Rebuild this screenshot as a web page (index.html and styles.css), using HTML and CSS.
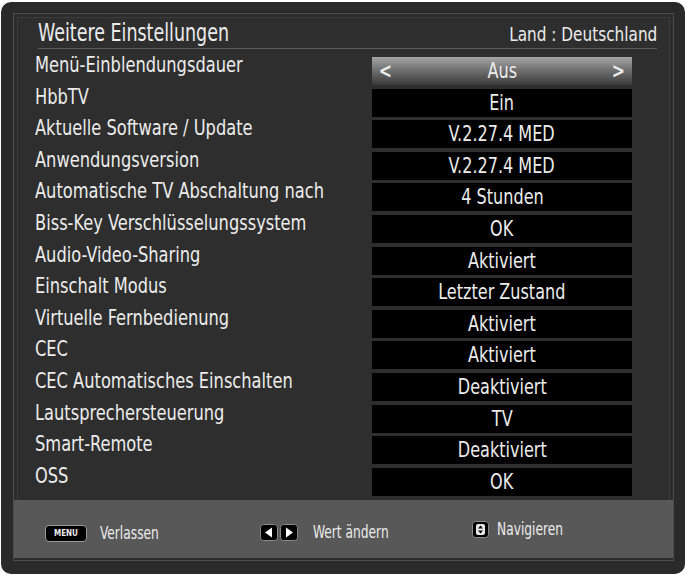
FILE: index.html
```html
<!DOCTYPE html>
<html lang="de">
<head>
<meta charset="utf-8">
<link rel="stylesheet" href="styles.css">
</head>
<body>
<div class="frame">
  <div class="panel">
    <div class="header">
      <span class="title">Weitere Einstellungen</span>
      <span class="country">Land : Deutschland</span>
    </div>
    <div class="rows">
      <div class="row"><span class="label">Menü-Einblendungsdauer</span><span class="value selected"><span class="chev">&lt;</span><span class="vt">Aus</span><span class="chev">&gt;</span></span></div>
      <div class="row"><span class="label">HbbTV</span><span class="value"><span class="vt">Ein</span></span></div>
      <div class="row"><span class="label">Aktuelle Software / Update</span><span class="value"><span class="vt">V.2.27.4 MED</span></span></div>
      <div class="row"><span class="label">Anwendungsversion</span><span class="value"><span class="vt">V.2.27.4 MED</span></span></div>
      <div class="row"><span class="label">Automatische TV Abschaltung nach</span><span class="value"><span class="vt">4 Stunden</span></span></div>
      <div class="row"><span class="label">Biss-Key Verschlüsselungssystem</span><span class="value"><span class="vt">OK</span></span></div>
      <div class="row"><span class="label">Audio-Video-Sharing</span><span class="value"><span class="vt">Aktiviert</span></span></div>
      <div class="row"><span class="label">Einschalt Modus</span><span class="value"><span class="vt">Letzter Zustand</span></span></div>
      <div class="row"><span class="label">Virtuelle Fernbedienung</span><span class="value"><span class="vt">Aktiviert</span></span></div>
      <div class="row"><span class="label">CEC</span><span class="value"><span class="vt">Aktiviert</span></span></div>
      <div class="row"><span class="label">CEC Automatisches Einschalten</span><span class="value"><span class="vt">Deaktiviert</span></span></div>
      <div class="row"><span class="label">Lautsprechersteuerung</span><span class="value"><span class="vt">TV</span></span></div>
      <div class="row"><span class="label">Smart-Remote</span><span class="value"><span class="vt">Deaktiviert</span></span></div>
      <div class="row"><span class="label">OSS</span><span class="value"><span class="vt">OK</span></span></div>
    </div>
    <div class="footer">
      <div class="hint hint-menu"><span class="menukey">MENU</span><span class="ft">Verlassen</span></div>
      <div class="hint hint-lr">
        <span class="keys">
          <svg width="18" height="17" viewBox="0 0 18 17"><rect x="0.5" y="0.5" width="17" height="16" rx="3" fill="#000" stroke="#8a8a8a"/><polygon points="12,3.5 12,13.5 5,8.5" fill="#fff"/></svg>
          <svg width="18" height="17" viewBox="0 0 18 17"><rect x="0.5" y="0.5" width="17" height="16" rx="3" fill="#000" stroke="#8a8a8a"/><polygon points="6,3.5 6,13.5 13,8.5" fill="#fff"/></svg>
        </span>
        <span class="ft">Wert ändern</span>
      </div>
      <div class="hint hint-nav">
        <svg width="17" height="17" viewBox="0 0 17 17"><rect x="0.5" y="0.5" width="16" height="16" rx="3" fill="#000" stroke="#8a8a8a"/><rect x="4" y="3" width="9" height="11" rx="2" fill="#e8e8e8"/><polygon points="8.5,4.5 11,7.5 6,7.5" fill="#000"/><polygon points="8.5,12.5 11,9.5 6,9.5" fill="#000"/></svg>
        <span class="ft">Navigieren</span>
      </div>
    </div>
  </div>
</div>
</body>
</html>
```
FILE: styles.css
```css
html, body {
  margin: 0;
  padding: 0;
  background: #ffffff;
}
body {
  font-family: "DejaVu Sans Condensed", "Liberation Sans", sans-serif;
  color: #ececec;
}
.frame {
  box-sizing: border-box;
  width: 684px;
  height: 572px;
  margin: 2px 0 0 1px;
  background: #2a2a2a;
  border-radius: 10px;
  padding: 11px 11px 13px 12px;
}
.panel {
  box-sizing: border-box;
  height: 100%;
  border: 1px solid #4c4c4c;
  box-shadow: inset 0 0 0 3px #2c2c2c, inset 0 0 0 4px #3c3c3c;
  background: #2e2e2e;
  display: flex;
  flex-direction: column;
}
.header {
  display: flex;
  justify-content: space-between;
  align-items: flex-end;
  margin: 0 16px 0 24px;
  height: 33px;
  border-bottom: 1px solid #5a5a5a;
  padding-bottom: 1px;
}
.title {
  display: inline-block;
  font-size: 24px;
  line-height: 28px;
  white-space: nowrap;
  transform: scaleX(0.81);
  transform-origin: left center;
}
.country {
  display: inline-block;
  font-size: 20px;
  line-height: 26px;
  white-space: nowrap;
  transform: scaleX(0.85);
  transform-origin: right center;
}
.rows {
  display: flex;
  flex-direction: column;
  gap: 3.6px;
  margin: 8px 0 0 21px;
}
.row {
  display: flex;
  align-items: center;
  height: 28px;
}
.label {
  display: inline-block;
  width: 337px;
  flex: none;
  font-size: 21px;
  line-height: 28px;
  white-space: nowrap;
  position: relative;
  top: -6px;
  transform: scaleX(0.86);
  transform-origin: left center;
}
.value {
  box-sizing: border-box;
  display: flex;
  justify-content: center;
  align-items: center;
  width: 260px;
  height: 28px;
  background: #000;
  font-size: 21px;
  line-height: 28px;
}
.vt {
  display: inline-block;
  white-space: nowrap;
  transform: scaleX(0.85);
}
.value.selected {
  justify-content: space-between;
  padding: 0 5px;
  background: linear-gradient(#a6a6a6 0%, #727272 45%, #3a3a3a 100%);
}
.chev {
  font-size: 22px;
  font-weight: bold;
  transform: scaleX(0.8);
}
.footer {
  margin-top: auto;
  height: 58px;
  margin-bottom: 2px;
  background: #585858;
  display: grid;
  grid-template-columns: 215px 212px auto;
  align-items: center;
  padding-left: 31px;
  font-size: 17px;
}
.hint {
  display: flex;
  align-items: center;
}
.ft {
  display: inline-block;
  white-space: nowrap;
  transform: scaleX(0.8);
  transform-origin: left center;
}
.hint-menu {
  margin-top: 8px;
  gap: 13px;
}
.menukey {
  box-sizing: border-box;
  width: 42px;
  height: 17px;
  background: #000;
  border: 1px solid #9a9a9a;
  border-radius: 4px;
  font-size: 8px;
  line-height: 15px;
  text-align: center;
  font-weight: bold;
}
.hint-lr {
  margin-top: 6px;
  gap: 15px;
}
.keys {
  display: flex;
  gap: 2px;
}
.keys svg, .hint-nav svg {
  display: block;
}
.hint-nav {
  gap: 8px;
  margin-top: 0;
}
```
